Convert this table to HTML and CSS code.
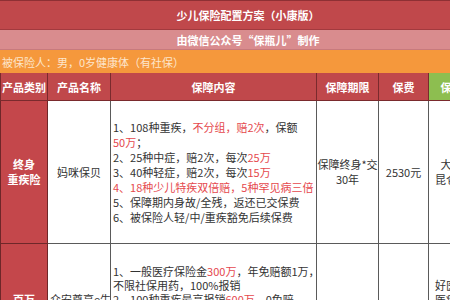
FILE: index.html
```html
<!DOCTYPE html>
<html lang="zh-CN">
<head>
<meta charset="utf-8">
<title>少儿保险配置方案（小康版）</title>
<link rel="stylesheet" href="styles.css">
</head>
<body>
<div class="sheet">
  <div class="title">少儿保险配置方案（小康版）</div>
  <div class="maker">由微信公众号“保瓶儿”制作</div>
  <div class="insured">被保险人：男，0岁健康体（有社保）</div>
  <table class="plan">
    <colgroup>
      <col class="c-type"><col class="c-name"><col class="c-cover"><col class="c-term"><col class="c-fee"><col class="c-co">
    </colgroup>
    <thead>
      <tr>
        <th>产品类别</th>
        <th>产品名称</th>
        <th>保障内容</th>
        <th>保障期限</th>
        <th>保费</th>
        <th class="green">保险公司</th>
      </tr>
    </thead>
    <tbody>
      <tr class="r1">
        <td class="type">终身<br>重疾险</td>
        <td class="center">妈咪保贝</td>
        <td class="cover">1、108种重疾，<span class="red">不分组，赔2次</span>，保额<br><span class="red">50万</span>；<br>2、25种中症，赔2次，每次<span class="red">25万</span><br>3、40种轻症，赔2次，每次<span class="red">15万</span><br><span class="red">4、18种少儿特疾双倍赔，5种罕见病三倍</span><br>5、保障期内身故/全残，返还已交保费<br>6、被保险人轻/中/重疾豁免后续保费</td>
        <td class="center tight">保障终身*交<br>30年</td>
        <td class="center">2530元</td>
        <td class="co">大都会人<br>昆仑健康险</td>
      </tr>
      <tr class="r2">
        <td class="type">百万<br>医疗险</td>
        <td class="spill">众安尊享e生<br>2020</td>
        <td class="cover">1、一般医疗保险金<span class="red">300万</span>，年免赔额1万，<br>不限社保用药，100%报销<br>2、100种重疾最高报销<span class="red">600万</span>，0免赔<br>3、院外特药保险金，最高600万<br>4、质子重离子医疗保险金<br>5、保证续保6年</td>
        <td class="center">1年</td>
        <td class="center">158元</td>
        <td class="co">好医保长期医疗险，保证续保20年，可附加</td>
      </tr>
    </tbody>
  </table>
</div>
</body>
</html>
```

FILE: styles.css
```css
html, body {
  margin: 0;
  padding: 0;
  overflow: hidden;
  background: #ffffff;
}

body {
  font-family: "Noto Sans CJK SC", "Noto Sans", sans-serif;
  font-size: 11px;
  color: #333333;
}

.sheet {
  width: 496px;
}

.title {
  height: 28px;
  border-top: 1px solid #8e3034;
  background: #c0484b;
  color: #ffffff;
  font-weight: bold;
  display: flex;
  align-items: center;
  justify-content: center;
  border-bottom: 1px solid #a23a3e;
}

.maker {
  height: 19px;
  background: #d98c8e;
  color: #ffffff;
  font-weight: bold;
  display: flex;
  align-items: center;
  justify-content: center;
  border-bottom: 1px solid #c77a7c;
}

.insured {
  height: 23px;
  background: #f5983c;
  color: #fde6cc;
  display: flex;
  align-items: center;
  padding-left: 2px;
}

.plan {
  width: 496px;
  border-collapse: collapse;
  table-layout: fixed;
}

.c-type { width: 47px; }
.c-name { width: 63px; }
.c-cover { width: 206px; }
.c-term { width: 62px; }
.c-fee { width: 50px; }
.c-co { width: 68px; }

.plan th {
  height: 27px;
  padding: 0;
  background: #c0484b;
  color: #ffffff;
  font-weight: bold;
  text-align: center;
  border: 1px solid #7a2a2d;
  border-top: none;
  white-space: nowrap;
  overflow: hidden;
}

.plan th.green {
  background: #8dbe50;
}

.plan td {
  padding: 0 2px;
  border: 1px solid #5a5a5a;
  vertical-align: middle;
  line-height: 15px;
}

.plan tr.r1 td {
  height: 142px;
}

.plan tr.r2 td {
  height: 124px;
  line-height: 14px;
}

.plan td.type {
  background: #c4474b;
  color: #ffffff;
  font-weight: bold;
  text-align: center;
  border-color: #6e2729;
}

.plan td.center {
  text-align: center;
}

.plan td.tight {
  padding: 0;
  white-space: nowrap;
  overflow: hidden;
}

.plan td.spill {
  text-align: left;
  white-space: nowrap;
  overflow: hidden;
}

.plan td.cover {
  white-space: nowrap;
  overflow: hidden;
}

.plan td.co {
  text-align: center;
  padding: 0 3px;
}

.red {
  color: #e5484d;
}
```
